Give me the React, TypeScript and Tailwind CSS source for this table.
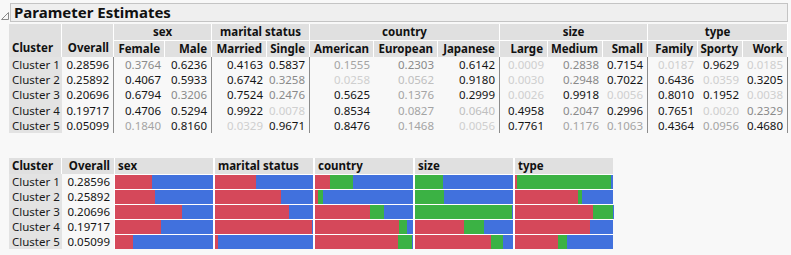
const rows = [
  {
    name: "Cluster 1",
    overall: "0.28596",
    vals: ["0.3764", "0.6236", "0.4163", "0.5837", "0.1555", "0.2303", "0.6142", "0.0009", "0.2838", "0.7154", "0.0187", "0.9629", "0.0185"],
    dark: ".kkk..k..k.k.",
  },
  {
    name: "Cluster 2",
    overall: "0.25892",
    vals: ["0.4067", "0.5933", "0.6742", "0.3258", "0.0258", "0.0562", "0.9180", "0.0030", "0.2948", "0.7022", "0.6436", "0.0359", "0.3205"],
    dark: "kkk...k..kk.k",
  },
  {
    name: "Cluster 3",
    overall: "0.20696",
    vals: ["0.6794", "0.3206", "0.7524", "0.2476", "0.5625", "0.1376", "0.2999", "0.0026", "0.9918", "0.0056", "0.8010", "0.1952", "0.0038"],
    dark: "k.k.k.k.k.kk.",
  },
  {
    name: "Cluster 4",
    overall: "0.19717",
    vals: ["0.4706", "0.5294", "0.9922", "0.0078", "0.8534", "0.0827", "0.0640", "0.4958", "0.2047", "0.2996", "0.7651", "0.0020", "0.2329"],
    dark: "kkk.k..k.kk..",
  },
  {
    name: "Cluster 5",
    overall: "0.05099",
    vals: ["0.1840", "0.8160", "0.0329", "0.9671", "0.8476", "0.1468", "0.0056", "0.7761", "0.1176", "0.1063", "0.4364", "0.0956", "0.4680"],
    dark: ".k.kk..k..k.k",
  },
];

const groups = [
  { label: "sex", span: "col-span-2", start: 0, levels: ["Female", "Male"] },
  { label: "marital status", span: "col-span-2", start: 2, levels: ["Married", "Single"] },
  { label: "country", span: "col-span-3", start: 4, levels: ["American", "European", "Japanese"] },
  { label: "size", span: "col-span-3", start: 7, levels: ["Large", "Medium", "Small"] },
  { label: "type", span: "col-span-3", start: 10, levels: ["Family", "Sporty", "Work"] },
];

// columns that close a group get a grey rule in the body
const groupEnds = [1, 3, 6, 9, 12];

const cols =
  "grid-cols-[53px_52px_51px_47px_55px_43px_64px_64px_62px_48px_55px_45px_50px_45px_45px]";

function tone(v: number, dark: boolean) {
  if (dark) return "text-[#141414]";
  if (v < 0.04) return "text-[#cfcfcf]";
  if (v < 0.07) return "text-[#bfbfbf]";
  if (v < 0.19) return "text-[#a4a4a4]";
  return "text-[#8a8a8a]";
}

const two = ["bg-[#d5485a]", "bg-[#4171dd]"];
const three = ["bg-[#d5485a]", "bg-[#3bb244]", "bg-[#4171dd]"];

const EstimatesTable = () => (
  <div className="ml-[9px] mt-[2px] w-[779px]">
    <div className={`grid ${cols} bg-[#e0e0e0] font-bold text-[#111]`}>
      <div className="row-span-2 flex items-end border-r border-white pb-[1px] pl-[3px]">Cluster</div>
      <div className="row-span-2 flex items-end justify-end border-r border-white pb-[1px] pr-[4px]">Overall</div>
      {groups.map((g) => (
        <div key={g.label} className={`${g.span} h-[17px] border-b border-r border-white text-center leading-[16px]`}>
          {g.label}
        </div>
      ))}
      {groups.flatMap((g) =>
        g.levels.map((l) => (
          <div key={l} className="h-[16px] border-r border-white pr-[4px] text-right leading-[15px]">
            {l}
          </div>
        ))
      )}
    </div>
    <div className={`grid ${cols}`}>
      {rows.map((r) => (
        <div key={r.name} className="contents">
          <div className="h-[15.2px] bg-[#e3e3e3] pl-[3px] leading-[15px] text-[#1a1a1a]">{r.name}</div>
          <div className="h-[15.2px] border-r border-[#8c8c8c] pr-[4px] text-right leading-[15px] text-[#141414]">
            {r.overall}
          </div>
          {r.vals.map((v, i) => (
            <div
              key={i}
              className={`h-[15.2px] pr-[4px] text-right leading-[15px] ${tone(parseFloat(v), r.dark[i] === "k")} ${
                groupEnds.includes(i) ? "border-r border-[#8c8c8c]" : ""
              }`}
            >
              {v}
            </div>
          ))}
        </div>
      ))}
    </div>
  </div>
);

const BarTable = () => (
  <div className="ml-[9px] mt-[25px] w-[604px]">
    <div className="grid grid-cols-[53px_53px_100px_100px_100px_100px_98px] bg-[#e0e0e0] font-bold text-[#111]">
      <div className="h-[16px] border-r border-white pl-[3px] leading-[15px]">Cluster</div>
      <div className="h-[16px] border-r border-white pr-[4px] text-right leading-[15px]">Overall</div>
      {groups.map((g, i) => (
        <div key={g.label} className={`h-[16px] pl-[3px] leading-[15px] ${i < 4 ? "border-r-2 border-white" : ""}`}>
          {g.label}
        </div>
      ))}
    </div>
    {rows.map((r) => (
      <div key={r.name} className="flex h-[15px]">
        <div className="w-[53px] bg-[#e3e3e3] pl-[3px] leading-[15px] text-[#1a1a1a]">{r.name}</div>
        <div className="w-[52px] pr-[4px] text-right leading-[15px] text-[#141414]">{r.overall}</div>
        <div className="flex w-[499px] gap-[2px] bg-white pl-[1px] pt-[1px]">
          {groups.map((g) => {
            const colors = g.levels.length === 2 ? two : three;
            return (
              <div key={g.label} className="flex h-[14px] w-[98px]">
                {g.levels.map((l, k) => (
                  <div
                    key={l}
                    className={colors[k]}
                    style={{ width: `${parseFloat(r.vals[g.start + k]) * 100}%` }}
                  />
                ))}
              </div>
            );
          })}
        </div>
      </div>
    ))}
  </div>
);

export default function App() {
  return (
    <div className="h-[255px] w-[791px] overflow-hidden bg-[#f8f8f8] pt-[3px] font-['Noto_Sans',sans-serif] text-[11.5px]">
      <div className="flex items-start">
        <svg width="10" height="19" viewBox="0 0 10 19" className="shrink-0">
          <polygon points="1.5,16.5 8.5,9.5 8.5,16.5" fill="none" stroke="#8a8a8a" strokeWidth="1" />
        </svg>
        <div className="h-[19px] w-[778px] border border-[#c4c4c4] bg-[#efefef] pl-[3px] text-[15px] font-bold leading-[17px] text-[#111]">
          Parameter Estimates
        </div>
      </div>
      <EstimatesTable />
      <BarTable />
    </div>
  );
}
